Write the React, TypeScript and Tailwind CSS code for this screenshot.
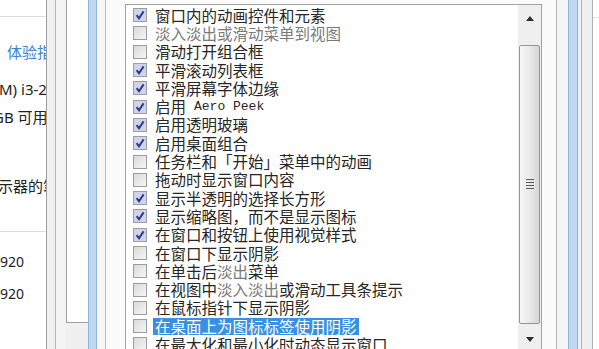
import React from 'react';

type Piece = { t: string; light?: boolean; mono?: boolean };
type Item = { parts: Piece[]; checked: boolean; selected?: boolean };

const items: Item[] = [
  { parts: [{ t: '窗口内的动画控件和元素' }], checked: true },
  { parts: [{ t: '淡入淡出或滑动菜单到视图', light: true }], checked: false },
  { parts: [{ t: '滑动打开组合框' }], checked: false },
  { parts: [{ t: '平滑滚动列表框' }], checked: true },
  { parts: [{ t: '平滑屏幕字体边缘' }], checked: true },
  { parts: [{ t: '启用' }, { t: 'Aero Peek', mono: true }], checked: true },
  { parts: [{ t: '启用透明玻璃' }], checked: true },
  { parts: [{ t: '启用桌面组合' }], checked: true },
  { parts: [{ t: '任务栏和「开始」菜单中的动画' }], checked: false },
  { parts: [{ t: '拖动时显示窗口内容' }], checked: false },
  { parts: [{ t: '显示半透明的选择长方形' }], checked: true },
  { parts: [{ t: '显示缩略图，而不是显示图标' }], checked: true },
  { parts: [{ t: '在窗口和按钮上使用视觉样式' }], checked: true },
  { parts: [{ t: '在窗口下显示阴影' }], checked: false },
  { parts: [{ t: '在单击后' }, { t: '淡出', light: true }, { t: '菜单' }], checked: false },
  { parts: [{ t: '在视图中' }, { t: '淡入淡出', light: true }, { t: '或滑动工具条提示' }], checked: false },
  { parts: [{ t: '在鼠标指针下显示阴影' }], checked: false },
  { parts: [{ t: '在桌面上为图标标签使用阴影' }], checked: false, selected: true },
  { parts: [{ t: '在最大化和最小化时动态显示窗口' }], checked: false },
];

const CheckBox = ({ checked }: { checked: boolean }) => (
  <span
    className={`flex h-[14px] w-[14px] shrink-0 items-center justify-center border border-[#9d9d9d] ${
      checked ? 'bg-[#d0d4ea]' : 'bg-linear-to-br from-[#dadada] to-[#f6f6f6]'
    }`}
  >
    {checked && (
      <svg width="10" height="10" viewBox="0 0 10 10">
        <path d="M1.6 5.2 L4 8.2 L8.6 1.4" stroke="#2a3c8c" strokeWidth="2" fill="none" />
      </svg>
    )}
  </span>
);

const Arrow = ({ down }: { down?: boolean }) => (
  <svg width="8" height="5" viewBox="0 0 8 5">
    <path d={down ? 'M0 0 L4 5 L8 0Z' : 'M0 5 L4 0 L8 5Z'} fill="#2e2e2e" />
  </svg>
);

const App: React.FC = () => {
  return (
    <div className="flex h-[349px] w-[599px] overflow-hidden bg-white font-['Noto_Sans_CJK_SC',sans-serif]">
      {/* system properties window behind */}
      <div className="flex w-[46px] shrink-0 flex-col overflow-hidden bg-white text-[15px] text-[#222] font-['Noto_Sans','Noto_Sans_CJK_SC',sans-serif]">
        <div className="h-[17px] border-b border-[#dcdcdc]" />
        <div className="mt-[24px] h-[22px] whitespace-nowrap pl-[7px] leading-[22px] text-[#3c84d0]">
          体验指数
        </div>
        <div className="ml-[-1px] mt-[16px] h-[20px] whitespace-nowrap leading-[20px]">M) i3-2350M</div>
        <div className="ml-[-7px] mt-[8px] h-[20px] whitespace-nowrap leading-[20px]">GB 可用</div>
        <div className="ml-[-17px] mt-[49px] h-[20px] whitespace-nowrap leading-[20px]">显示器的笔</div>
        <div className="h-[36px] border-b border-[#dcdcdc]" />
        <div className="ml-[-8px] mt-[20px] h-[20px] whitespace-nowrap text-[14px] leading-[20px]">1920</div>
        <div className="ml-[-8px] mt-[12px] h-[20px] whitespace-nowrap text-[14px] leading-[20px]">1920</div>
      </div>

      <div className="w-[9px] shrink-0 border-l border-[#9e9e9e] bg-[#f0f0f0]" />
      <div className="w-[11px] shrink-0 border-l border-[#b5b5b5] bg-[#f3f3f3]" />
      <div className="flex w-[22px] shrink-0 flex-col bg-[#f0f0f0]">
        <div className="h-[323px] border-b border-l border-[#a0a0a0] bg-white" />
      </div>
      <div className="w-[9px] shrink-0 border-x border-[#93b3d3] bg-[#bdd8f2]" />
      <div className="w-[8px] shrink-0 bg-[#f6f6f6]" />
      <div className="w-[20px] shrink-0 border-l border-[#bdbdbd] bg-[#fbfbfb]" />

      {/* performance options list */}
      <div className="w-[417px] shrink-0 bg-[#fbfbfb] pt-[4px]">
        <div className="flex h-full border-x border-t border-[#a3a3a3] bg-white">
          <div className="flex-1 pt-[1px] text-[15.5px] leading-[18px] text-[#262626]">
            {items.map((item, i) => (
              <div key={i} className="flex h-[18.3px] items-center pl-[7px]">
                <CheckBox checked={item.checked} />
                <span
                  className={`ml-[6px] flex h-[17px] items-center whitespace-nowrap px-[2px] leading-[17px] ${
                    item.selected ? 'bg-[#3890e2] text-white' : ''
                  }`}
                >
                  {item.parts.map((p, j) =>
                    p.mono ? (
                      <span key={j} className="ml-[8px] font-['Liberation_Mono',monospace] text-[13px]">
                        {p.t}
                      </span>
                    ) : (
                      <span key={j} className={p.light ? 'text-[#7a7a7a]' : ''}>
                        {p.t}
                      </span>
                    )
                  )}
                </span>
              </div>
            ))}
          </div>

          <div className="flex w-[23px] shrink-0 flex-col bg-[#efefef]">
            <div className="flex h-[27px] items-center justify-center">
              <Arrow />
            </div>
            <div className="h-[13px]" />
            <div className="mx-[1px] flex h-[283px] items-center justify-center rounded-[2px] border border-[#969696] bg-linear-to-r from-[#f5f5f5] via-[#eaeaea] to-[#d5d5d5]">
              <div className="flex w-[8px] flex-col gap-[2px]">
                <div className="h-[1px] bg-[#5a5a5a]" />
                <div className="h-[1px] bg-[#5a5a5a]" />
                <div className="h-[1px] bg-[#5a5a5a]" />
                <div className="h-[1px] bg-[#5a5a5a]" />
              </div>
            </div>
            <div className="h-[5px]" />
            <div className="flex h-[20px] items-center justify-center">
              <Arrow down />
            </div>
          </div>
        </div>
      </div>

      <div className="w-[14px] shrink-0 bg-[#fbfbfb]" />
      <div className="w-[12px] shrink-0 border-l border-[#b5b5b5] bg-[#f4f5f7]" />
      <div className="w-[10px] shrink-0 border-x border-[#93b3d3] bg-[#bdd8f2]" />
      <div className="w-[3px] shrink-0 bg-[#eef2f6]" />
      <div className="w-[11px] shrink-0 border-l border-[#b0b0b0] bg-[#f0f0f0]" />
      <div className="flex-1 border-l border-[#b0b0b0] bg-white">
        <div className="h-[18px] border-b border-[#e2e2e2]" />
      </div>
    </div>
  );
};

export default App;
